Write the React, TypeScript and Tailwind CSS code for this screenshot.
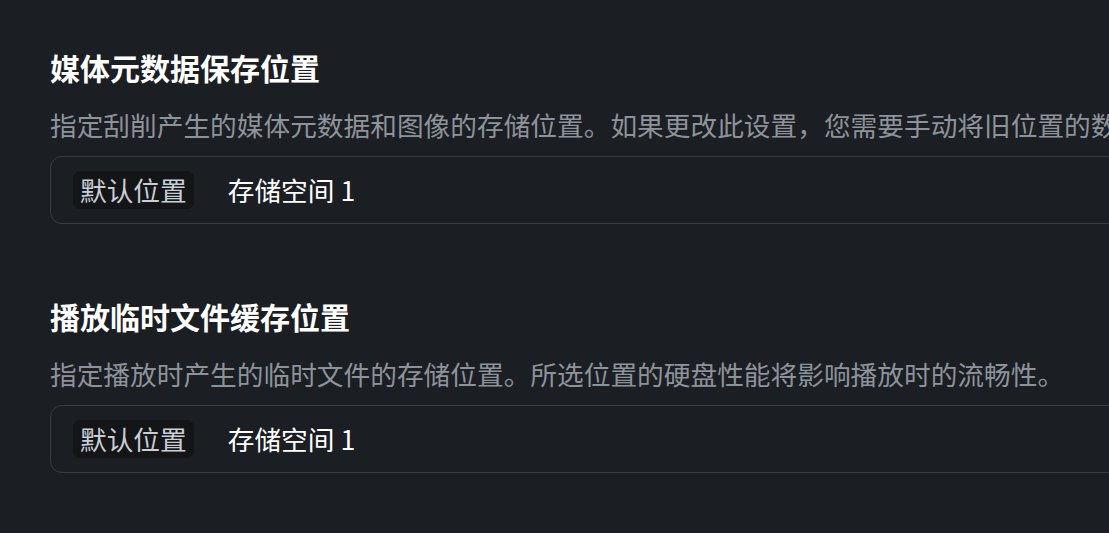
import React from "react";

const sections = [
    {
        title: "媒体元数据保存位置",
        desc: "指定刮削产生的媒体元数据和图像的存储位置。如果更改此设置，您需要手动将旧位置的数据迁移到新位置。",
        value: "存储空间 1",
    },
    {
        title: "播放临时文件缓存位置",
        desc: "指定播放时产生的临时文件的存储位置。所选位置的硬盘性能将影响播放时的流畅性。",
        value: "存储空间 1",
    },
];

export default function App() {
    return (
        <div
            className="w-[1109px] h-[533px] overflow-hidden bg-[#1b1e22] pl-[50px] pt-[47px]"
            style={{ fontFamily: '"Noto Sans CJK SC", "Noto Sans", sans-serif' }}
        >
            <div className="w-[1200px] flex flex-col gap-[72px]">
                {sections.map((s) => (
                    <div key={s.title} className="flex flex-col">
                        <h2 className="text-[30px] leading-[40px] font-bold text-white">{s.title}</h2>
                        <p className="mt-[18px] text-[26.7px] leading-[40px] text-[#8d939b] whitespace-nowrap">{s.desc}</p>
                        <div className="mt-[11px] h-[68px] flex items-center border border-[#3a3d43] rounded-[12px] pl-[22px]">
                            <span className="h-[38px] flex items-center px-[7px] rounded-[7px] bg-[#131517] text-[26.7px] text-[#c9ced6]">
                                默认位置
                            </span>
                            <span className="ml-[34px] text-[26.7px] text-white">{s.value}</span>
                        </div>
                    </div>
                ))}
            </div>
        </div>
    );
}
